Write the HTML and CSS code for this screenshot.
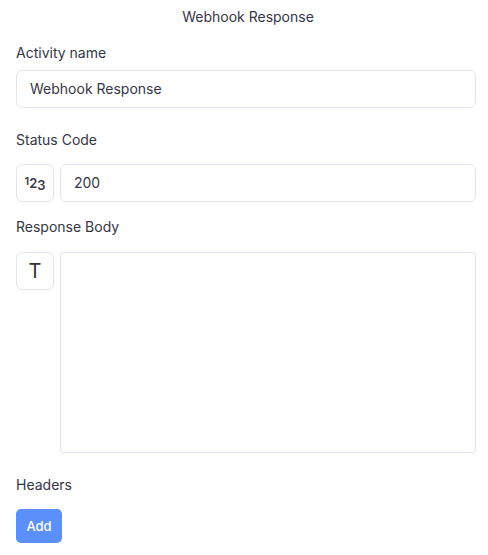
FILE: index.html
```html
<!DOCTYPE html>
<html>
<head>
<meta charset="utf-8">
<link rel="stylesheet" href="styles.css">
</head>
<body>
<div class="panel">
  <div class="title">Webhook Response</div>
  <div class="field first">
    <div class="label">Activity name</div>
    <div class="input">Webhook Response</div>
  </div>
  <div class="field status">
    <div class="label">Status Code</div>
    <div class="row">
      <div class="type-box num"><span class="d1">1</span><span class="d2">2</span><span class="d3">3</span></div>
      <div class="input grow">200</div>
    </div>
  </div>
  <div class="field body">
    <div class="label">Response Body</div>
    <div class="row">
      <div class="type-box txt">T</div>
      <div class="textarea grow"></div>
    </div>
  </div>
  <div class="field headers">
    <div class="label">Headers</div>
    <div><button class="btn">Add</button></div>
  </div>
</div>
</body>
</html>
```
FILE: styles.css
```css
* { box-sizing: border-box; }
html, body { margin: 0; padding: 0; background: #fff; }
body {
  font-family: Inter, "Noto Sans", sans-serif;
  color: #363645;
  font-size: 14px;
}
.panel {
  padding: 7px 12px 0 16px;
  display: flex;
  flex-direction: column;
}
.title {
  text-align: center;
  height: 20px;
  line-height: 20px;
  padding-left: 4px;
  margin-bottom: 16px;
}
.field {
  display: flex;
  flex-direction: column;
}
.label {
  height: 20px;
  line-height: 20px;
  margin-bottom: 14px;
}
.first .label { margin-bottom: 7px; }
.status { margin-top: 22px; }
.body { margin-top: 15px; }
.body .label { margin-bottom: 15px; }
.headers { margin-top: 22px; }
.input {
  height: 38px;
  border: 1px solid #e4e4ee;
  border-radius: 6px;
  padding: 0 13px;
  line-height: 36px;
}
.row {
  display: flex;
  gap: 6px;
}
.grow { flex: 1; }
.type-box {
  width: 38px;
  height: 38px;
  border: 1px solid #e4e4ee;
  border-radius: 6px;
  display: flex;
  align-items: center;
  justify-content: center;
}
.num { font-weight: 600; color: #3a3a48; }
.num .d1 { position: relative; top: -2px; font-size: 11px; }
.num .d2 { font-size: 13px; }
.num .d3 { position: relative; top: 2px; font-size: 13px; }
.txt { font-size: 20px; font-weight: 400; color: #333; }
.textarea {
  height: 201px;
  border: 1px solid #e4e4ee;
  border-radius: 3px;
}
.btn {
  background: #5b8ff9;
  color: #fff;
  border: none;
  border-radius: 5px;
  height: 34px;
  width: 46px;
  font-family: inherit;
  font-size: 13px;
  font-weight: 500;
  padding: 0;
}
```
